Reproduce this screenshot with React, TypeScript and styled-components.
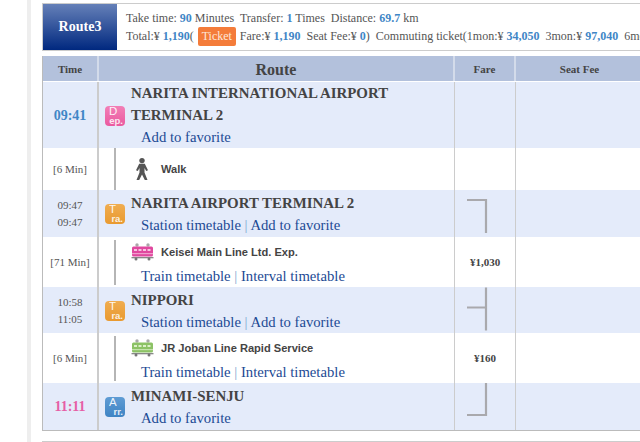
import { FC, ReactNode } from "react";
import styled, { createGlobalStyle } from "styled-components";

const GlobalStyle = createGlobalStyle`
  html, body {
    margin: 0;
    padding: 0;
    background: #fff;
    overflow: hidden;
  }
  body {
    width: 640px;
    height: 442px;
    font-family: "Liberation Serif", "Times New Roman", serif;
    color: #555;
  }
`;

const Page = styled.div`
  width: 640px;
  height: 442px;
  margin-left: 27px;
  padding: 3px 0 0 11px;
  border-left: 4px solid #eee;
  box-sizing: border-box;
`;

const Summary = styled.div`
  display: flex;
  height: 48px;
  box-sizing: border-box;
  border: 1px solid #ccc;
  border-right: none;
  margin-bottom: 5px;
`;

const RouteName = styled.div`
  width: 74px;
  flex: none;
  display: flex;
  align-items: center;
  justify-content: center;
  background: linear-gradient(#6580b8, #00287f);
  color: #fff;
  font-size: 14px;
  font-weight: bold;
`;

const SummaryText = styled.div`
  padding: 5px 0 0 9px;
  font-size: 12px;
  line-height: 18px;
  white-space: nowrap;
`;

const Num = styled.b`
  color: #3f86c6;
`;

const TicketButton = styled.span`
  display: inline-block;
  width: 38px;
  height: 19px;
  line-height: 19px;
  margin: 0 4px 0 4px;
  text-align: center;
  background: #f47c3a;
  border-radius: 2px;
  color: #fde6d8;
`;

const Table = styled.div`
  border-left: 1px solid #bbb;
  border-bottom: 1px solid #bbb;
  margin-bottom: 10px;
`;

const Row = styled.div<{ $h: number; $blue?: boolean }>`
  display: grid;
  grid-template-columns: 56px 356px 61px 129px;
  height: ${(p) => p.$h}px;
  background: ${(p) => (p.$blue ? "#e4ebfa" : "#fff")};
`;

const HeadRow = styled(Row)`
  background: #b3c1dc;
  font-weight: bold;
  color: #444;
  margin-bottom: 1px;
`;

const Cell = styled.div`
  display: flex;
  flex-direction: column;
  align-items: center;
  justify-content: center;
  border-right: 1px solid #ccc;
  min-width: 0;
`;

const HeadCell = styled(Cell)<{ $big?: boolean }>`
  border-right: 2px solid #d3dbea;
  font-size: ${(p) => (p.$big ? 16 : 11)}px;
  padding-top: ${(p) => (p.$big ? 3 : 0)}px;
`;

const TimeCell = styled(Cell)`
  border-right: 2px solid #ccc;
  font-size: 11px;
  line-height: 17px;
`;

const BigTime = styled.b<{ $pink?: boolean }>`
  font-size: 14px;
  color: ${(p) => (p.$pink ? "#e65fa6" : "#3f86c6")};
`;

const RouteCell = styled.div`
  display: flex;
  border-right: 1px solid #ccc;
`;

const BadgeSlot = styled.div`
  width: 32px;
  flex: none;
  display: flex;
  align-items: center;
  padding: 0 0 0 6px;
  box-sizing: border-box;
`;

const Badge = styled.div<{ $from: string; $to: string }>`
  width: 20px;
  height: 20px;
  border-radius: 4px;
  background: linear-gradient(${(p) => p.$from}, ${(p) => p.$to});
  color: #fff;
  font-family: "Liberation Sans", Arial, sans-serif;
  position: relative;
  overflow: hidden;
`;

const BadgeTop = styled.span`
  position: absolute;
  left: 4px;
  top: 0;
  font-size: 11.5px;
  line-height: 11px;
  opacity: 0.9;
`;

const BadgeBottom = styled.span`
  position: absolute;
  right: 2px;
  bottom: 1px;
  font-size: 9.5px;
  line-height: 8px;
  font-weight: bold;
  opacity: 0.85;
`;

const StationInfo = styled.div<{ $top: number }>`
  display: flex;
  flex-direction: column;
  padding-top: ${(p) => p.$top}px;
`;

const StationName = styled.div`
  font-size: 14.9px;
  font-weight: bold;
  line-height: 22px;
  color: #444;
`;

const LinkLine = styled.div`
  font-size: 14.7px;
  line-height: 23px;
  padding-left: 10px;
  color: #7fa6d0;
  white-space: nowrap;
`;

const LinkText = styled.span`
  color: #1c4a94;
`;

const RailSlot = styled.div<{ $inset: number }>`
  width: 32px;
  flex: none;
  padding: ${(p) => p.$inset}px 0 ${(p) => p.$inset}px 15px;
  box-sizing: border-box;
`;

const Rail = styled.div`
  width: 2px;
  height: 100%;
  background: #b5b5b5;
`;

const WalkBody = styled.div`
  display: flex;
  align-items: center;
  gap: 12px;
  padding-left: 4px;
`;

const LineName = styled.div`
  font-family: "Liberation Sans", Arial, sans-serif;
  font-size: 11.1px;
  font-weight: bold;
  color: #444;
  white-space: nowrap;
`;

const LineBody = styled.div`
  display: flex;
  flex-direction: column;
  padding-top: 4px;
`;

const LineHead = styled.div`
  display: flex;
  align-items: center;
  gap: 7px;
  height: 21px;
  margin-bottom: 3px;
`;

const FareCell = styled(Cell)`
  font-size: 11px;
  font-weight: bold;
  color: #444;
  padding-bottom: 2px;
`;

const BracketCell = styled(Cell)``;

const Bracket = styled.svg`
  display: block;
  width: 60px;
  height: 100%;
`;

const SeatCell = styled.div``;

const Walker = () => (
  <svg width="14" height="24" viewBox="0 0 14 24">
    <circle cx="7" cy="3.6" r="2.7" fill="#555" />
    <path d="M4.2 6.8h5.6L13 13.2l-1.8.9L9.5 11v4.4L12.5 23H9.8L7 17.4 4.2 23H1.5l3-7.6V11L2.8 14.1 1 13.2z" fill="#555" />
  </svg>
);

const Train: FC<{ color: string; light: string }> = ({ color, light }) => (
  <svg width="23" height="18" viewBox="0 0 23 18">
    <circle cx="6" cy="2" r="1.7" fill="#a8a8a8" />
    <circle cx="17" cy="2" r="1.7" fill="#a8a8a8" />
    <rect x="1" y="3.5" width="21" height="10" rx="1.5" fill={color} />
    <rect x="3" y="6" width="3" height="2" fill={light} />
    <rect x="7.5" y="6" width="3" height="2" fill={light} />
    <rect x="12" y="6" width="3" height="2" fill={light} />
    <rect x="16.5" y="6" width="3" height="2" fill={light} />
    <rect x="1" y="10" width="21" height="1.2" fill={light} opacity="0.7" />
    <rect x="0.5" y="14" width="22" height="1.3" fill="#888" />
    <circle cx="5" cy="16" r="1.5" fill="#777" />
    <circle cx="18" cy="16" r="1.5" fill="#777" />
  </svg>
);

const Station: FC<{
  h: number;
  top: number;
  times: ReactNode;
  badge: [string, string, string, string];
  name: ReactNode;
  links: string[];
  bracket?: ReactNode;
}> = ({ h, top, times, badge, name, links, bracket }) => (
  <Row $h={h} $blue>
    <TimeCell>{times}</TimeCell>
    <RouteCell>
      <BadgeSlot>
        <Badge $from={badge[2]} $to={badge[3]}>
          <BadgeTop>{badge[0]}</BadgeTop>
          <BadgeBottom>{badge[1]}</BadgeBottom>
        </Badge>
      </BadgeSlot>
      <StationInfo $top={top}>
        <StationName>{name}</StationName>
        <LinkLine>
          {links.map((l, i) => (
            <span key={l}>
              {i > 0 && " | "}
              <LinkText>{l}</LinkText>
            </span>
          ))}
        </LinkLine>
      </StationInfo>
    </RouteCell>
    <BracketCell>{bracket}</BracketCell>
    <SeatCell />
  </Row>
);

const LineRow: FC<{
  h: number;
  time: string;
  fare: string;
  line: string;
  train: [string, string];
}> = ({ h, time, fare, line, train }) => (
  <Row $h={h}>
    <TimeCell>{time}</TimeCell>
    <RouteCell>
      <RailSlot $inset={3}>
        <Rail />
      </RailSlot>
      <LineBody>
        <LineHead>
          <Train color={train[0]} light={train[1]} />
          <LineName>{line}</LineName>
        </LineHead>
        <LinkLine>
          <LinkText>Train timetable</LinkText> | <LinkText>Interval timetable</LinkText>
        </LinkLine>
      </LineBody>
    </RouteCell>
    <FareCell>{fare}</FareCell>
    <SeatCell />
  </Row>
);

export default function App() {
  return (
    <Page>
      <GlobalStyle />
      <Summary>
        <RouteName>Route3</RouteName>
        <SummaryText>
          <div>
            Take time: <Num>90</Num> Minutes&nbsp; Transfer: <Num>1</Num> Times&nbsp; Distance: <Num>69.7</Num> km
          </div>
          <div>
            Total:¥ <Num>1,190</Num>(<TicketButton>Ticket</TicketButton>Fare:¥ <Num>1,190</Num>&nbsp; Seat Fee:¥ <Num>0</Num>)&nbsp; Commuting ticket(1mon:¥ <Num>34,050</Num>&nbsp; 3mon:¥ <Num>97,040</Num>&nbsp; 6mon
          </div>
        </SummaryText>
      </Summary>

      <Table>
        <HeadRow $h={25}>
          <HeadCell>Time</HeadCell>
          <HeadCell $big>Route</HeadCell>
          <HeadCell>Fare</HeadCell>
          <HeadCell>Seat Fee</HeadCell>
        </HeadRow>

        <Station
          h={66}
          top={0}
          times={<BigTime>09:41</BigTime>}
          badge={["D", "ep.", "#f27fb6", "#ea5aa0"]}
          name={
            <>
              NARITA INTERNATIONAL AIRPORT
              <br />
              TERMINAL 2
            </>
          }
          links={["Add to favorite"]}
        />

        <Row $h={42}>
          <TimeCell>[6 Min]</TimeCell>
          <RouteCell>
            <RailSlot $inset={0}>
              <Rail />
            </RailSlot>
            <WalkBody>
              <Walker />
              <LineName>Walk</LineName>
            </WalkBody>
          </RouteCell>
          <BracketCell />
          <SeatCell />
        </Row>

        <Station
          h={47}
          top={2}
          times={
            <>
              <div>09:47</div>
              <div>09:47</div>
            </>
          }
          badge={["T", "ra.", "#f0ad50", "#e99a30"]}
          name="NARITA AIRPORT TERMINAL 2"
          links={["Station timetable", "Add to favorite"]}
          bracket={
            <Bracket viewBox="0 0 60 47">
              <path d="M12 10h19v33" fill="none" stroke="#a9a9ad" strokeWidth="2.2" />
            </Bracket>
          }
        />

        <LineRow h={50} time="[71 Min]" fare="¥1,030" line="Keisei Main Line Ltd. Exp." train={["#e0489f", "#f6c4e0"]} />

        <Station
          h={46}
          top={2}
          times={
            <>
              <div>10:58</div>
              <div>11:05</div>
            </>
          }
          badge={["T", "ra.", "#f0ad50", "#e99a30"]}
          name="NIPPORI"
          links={["Station timetable", "Add to favorite"]}
          bracket={
            <Bracket viewBox="0 0 60 46">
              <path d="M12 20h19M31 0v43" fill="none" stroke="#a9a9ad" strokeWidth="2.2" />
            </Bracket>
          }
        />

        <LineRow h={50} time="[6 Min]" fare="¥160" line="JR Joban Line Rapid Service" train={["#8cc265", "#dcefca"]} />

        <Station
          h={47}
          top={2}
          times={<BigTime $pink>11:11</BigTime>}
          badge={["A", "rr.", "#5f9cd4", "#3f84c4"]}
          name="MINAMI-SENJU"
          links={["Add to favorite"]}
          bracket={
            <Bracket viewBox="0 0 60 47">
              <path d="M31 0v32H12" fill="none" stroke="#a9a9ad" strokeWidth="2.2" />
            </Bracket>
          }
        />
      </Table>

      <Summary>
        <RouteName />
      </Summary>
    </Page>
  );
}
